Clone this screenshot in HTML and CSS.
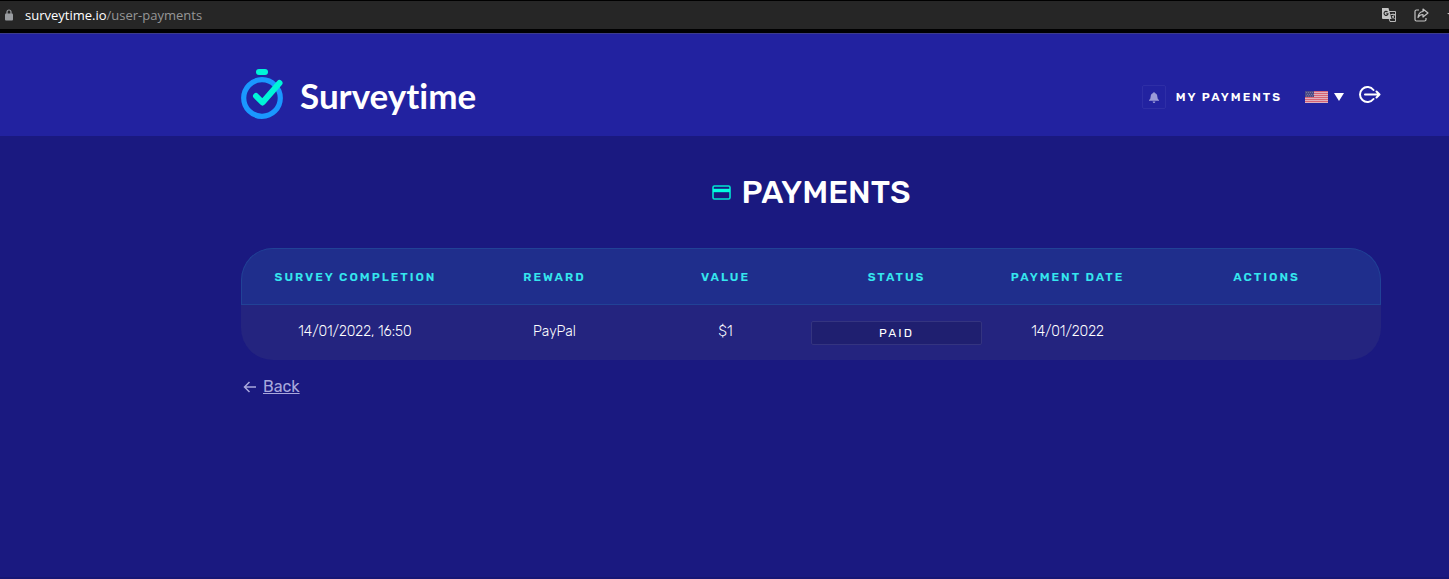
FILE: index.html
```html
<!DOCTYPE html>
<html lang="en">
<head>
    <meta charset="UTF-8">
    <title>Surveytime</title>
    <link rel="stylesheet" href="styles.css">
</head>
<body>

<div class="address-bar">
    <svg class="lock" width="8" height="12" viewBox="0 0 8 12" aria-hidden="true">
        <path d="M2 5V3a2 2 0 0 1 4 0v2" fill="none" stroke="#9a9da1" stroke-width="1.2"/>
        <rect y="4.5" width="8" height="7" rx="1" fill="#9a9da1"/>
    </svg>
    <div class="url"><span class="host">surveytime.io</span>/user-payments</div>
    <button type="button" class="bar-button" aria-label="Translate">
        <svg width="14" height="14" viewBox="0 0 14 14">
            <path d="M5 3.500h8.500v10H8z" fill="none" stroke="#b8b8b8"/>
            <path d="M0 0h6.500L9.500 11H1a1 1 0 0 1-1-1z" fill="#c4c4c4"/>
            <path d="M5.500 4A2 2 0 1 0 6 5.800H4.300" fill="none" stroke="#262626" stroke-width="1.100"/>
            <path d="M8.500 6.500H13M11 5.500v1M12.300 6.500c-.5 2-1.300 3-2.300 4M10 8l2.500 3" fill="none" stroke="#b8b8b8"/>
        </svg>
    </button>
    <button type="button" class="bar-button" aria-label="Share">
        <svg width="15" height="14" viewBox="0 0 15 14" fill="none" stroke="#c4c4c4" stroke-width="1.200" stroke-linejoin="round">
            <path d="M5 2H2.500Q1 2 1 3.500v8Q1 13 2.500 13h8q1.500 0 1.500-1.500V10"/>
            <path d="M9 1l5 4-5 4V6.500Q5.500 6.500 4 9.500 4.500 4 9 3.500z"/>
        </svg>
    </button>
    <button type="button" class="bar-button" aria-label="Bookmark">
        <svg width="14" height="14" viewBox="0 0 14 14">
            <path d="M7 0l2 5h5l-4 3.200 1.500 5L7 10.500l-4.500 2.700L4 8.200 0 5h5z" fill="#c4c4c4"/>
        </svg>
    </button>
</div>

<header class="header">
    <a href="#" class="logo">
        <svg width="43" height="50" viewBox="0 0 43 50" aria-hidden="true">
            <circle cx="21" cy="29" r="18.300" fill="none" stroke="#1a98ff" stroke-width="5.200"/>
            <rect x="15" y="0" width="12" height="6" rx="3" fill="#00f5d8"/>
            <path d="M15 27l6.500 6.500L38.500 14" fill="none" stroke="#00f5d8" stroke-width="6" stroke-linecap="round" stroke-linejoin="round"/>
        </svg>
        <span class="logo-text">Surveytime</span>
    </a>
    <nav class="nav">
        <button type="button" class="bell" aria-label="Notifications">
            <svg width="10" height="11" viewBox="0 0 10 11" fill="#9a9ad8">
                <path d="M5 0Q5.700 0 5.700.9 8.300 1.500 8.300 4.500q0 2.500 1.700 3.500v.8H0V8q1.700-1 1.700-3.500 0-3 2.600-3.600Q4.300 0 5 0zM3.600 9.500h2.800Q6.200 11 5 11T3.600 9.500z"/>
            </svg>
        </button>
        <a href="#" class="nav-link">MY PAYMENTS</a>
        <button type="button" class="language" aria-label="Language">
            <svg width="23" height="12" viewBox="0 0 23 12">
                <rect width="23" height="12" fill="#dfb0bf"/>
                <path d="M0 .5h23M0 2.500h23M0 4.500h23M0 6.500h23M0 8.500h23M0 10.500h23" stroke="#d66476"/>
                <rect width="9" height="6" fill="#4b4a85"/>
                <path d="M1 1.500h8M2 3.500h7M1 5h8" stroke="#77769f" stroke-dasharray="1 1"/>
            </svg>
            <svg width="10" height="8" viewBox="0 0 10 8"><path d="M0 0h10L5 8z" fill="#fff"/></svg>
        </button>
        <a href="#" class="logout" aria-label="Log out">
            <svg width="23" height="18" viewBox="0 0 23 18" fill="none" stroke="#fff" stroke-width="2" stroke-linecap="round" stroke-linejoin="round">
                <path d="M15.500 4A7.500 7.500 0 1 0 15.500 13M7 8.500h14.500M18.500 5.500l3 3-3 3"/>
            </svg>
        </a>
    </nav>
</header>

<main class="content">
    <h1 class="title">
        <svg width="19" height="15" viewBox="0 0 19 15" aria-hidden="true">
            <rect x="1" y="1" width="17" height="13" rx="1.500" fill="none" stroke="#00e5d0" stroke-width="1.600"/>
            <path d="M1 5.500h17" stroke="#00ffe0" stroke-width="3.400"/>
        </svg>
        PAYMENTS
    </h1>

    <table class="payments">
        <thead>
            <tr>
                <th class="wide">SURVEY COMPLETION</th>
                <th>REWARD</th>
                <th>VALUE</th>
                <th>STATUS</th>
                <th>PAYMENT DATE</th>
                <th class="wide">ACTIONS</th>
            </tr>
        </thead>
        <tbody>
            <tr>
                <td>14/01/2022, 16:50</td>
                <td>PayPal</td>
                <td>$1</td>
                <td class="status-cell"><div class="status">PAID</div></td>
                <td>14/01/2022</td>
                <td></td>
            </tr>
        </tbody>
    </table>

    <a href="#" class="back">
        <svg width="13" height="12" viewBox="0 0 13 12" fill="none" stroke="#a9a8dc" stroke-width="1.500" aria-hidden="true">
            <path d="M6.500 1l-5 5 5 5M1.500 6H13"/>
        </svg>
        <span class="back-text">Back</span>
    </a>
</main>

</body>
</html>
```
FILE: styles.css
```css
* {
    box-sizing: border-box;
}

body {
    display: flex;
    flex-direction: column;
    min-height: 100vh;
    margin: 0;
    background-color: #1a1980;
    border-bottom: 2px solid #171674;
    color: #fff;
    font-family: Rubik, Roboto, sans-serif;
}

button {
    padding: 0;
    border: none;
    background: none;
    cursor: pointer;
}

svg {
    display: block;
    flex-shrink: 0;
}

.address-bar {
    display: flex;
    align-items: center;
    height: 33px;
    padding-left: 5px;
    overflow: hidden;
    background-color: #262626;
    border-top: 1px solid #000;
    border-bottom: 4px solid #000;
}

.url {
    flex: 1;
    margin-left: 12px;
    color: #969696;
    font-family: "Open Sans", sans-serif;
    font-size: 13px;
}

.host {
    color: #fff;
}

.bar-button {
    flex-shrink: 0;
    margin-right: 18px;
}

.bar-button:last-child {
    margin-right: -12px;
}

.header {
    display: flex;
    justify-content: space-between;
    align-items: center;
    height: 103px;
    padding: 18px 68px 0 241px;
    background-color: #2222a0;
    border-top: 1px solid #3c3c8c;
}

.logo {
    display: flex;
    align-items: center;
    gap: 16px;
    color: #fff;
    text-decoration: none;
}

.logo-text {
    padding-top: 2px;
    font-family: Lato, sans-serif;
    font-size: 35px;
    font-weight: 700;
    font-variant-ligatures: none;
    line-height: 40px;
}

.nav {
    display: flex;
    align-items: center;
    padding-top: 6px;
}

.bell {
    display: flex;
    justify-content: center;
    align-items: center;
    width: 24px;
    height: 24px;
    border: 1px solid #2e2ea6;
    border-radius: 2px;
}

.nav-link {
    margin-left: 10px;
    color: #fff;
    font-size: 12px;
    font-weight: 600;
    letter-spacing: 2px;
    text-decoration: none;
}

.language {
    display: flex;
    align-items: center;
    gap: 6px;
    margin-left: 23px;
}

.logout {
    margin-left: 14px;
    padding-bottom: 4px;
}

.content {
    padding: 36px 68px 0 241px;
}

.title {
    display: flex;
    justify-content: center;
    align-items: center;
    gap: 11px;
    margin: 0 0 36px;
    font-size: 32px;
    font-weight: 500;
    line-height: 40px;
}

.payments {
    width: 100%;
    table-layout: fixed;
    border-collapse: separate;
    border-spacing: 0;
    font-size: 14px;
    font-weight: 300;
    text-align: center;
}

.payments th {
    width: 15%;
    height: 57px;
    padding: 0;
    background-color: #1f2e8c;
    border: solid #214296;
    border-width: 1px 0;
    color: #35e6ee;
    font-size: 12px;
    font-weight: 600;
    letter-spacing: 2px;
}

.payments th.wide {
    width: 20%;
}

.payments th:first-child {
    border-left-width: 1px;
    border-top-left-radius: 32px;
}

.payments th:last-child {
    border-right-width: 1px;
    border-top-right-radius: 32px;
}

.payments td {
    height: 55px;
    padding: 0 0 2px;
    background-color: #24247f;
}

.payments td:first-child {
    border-bottom-left-radius: 32px;
}

.payments td:last-child {
    border-bottom-right-radius: 32px;
}

.payments .status-cell {
    padding: 0;
}

.status {
    height: 24px;
    background-color: #1f1f70;
    border: 1px solid #343480;
    border-radius: 2px;
    font-size: 12px;
    font-weight: 400;
    line-height: 22px;
    letter-spacing: 2px;
}

.back {
    display: inline-flex;
    align-items: center;
    gap: 7px;
    margin: 17px 0 0 2px;
    color: #a9a8dc;
    font-size: 16px;
    line-height: 20px;
    text-decoration: none;
}

.back-text {
    text-decoration: underline;
}
```
